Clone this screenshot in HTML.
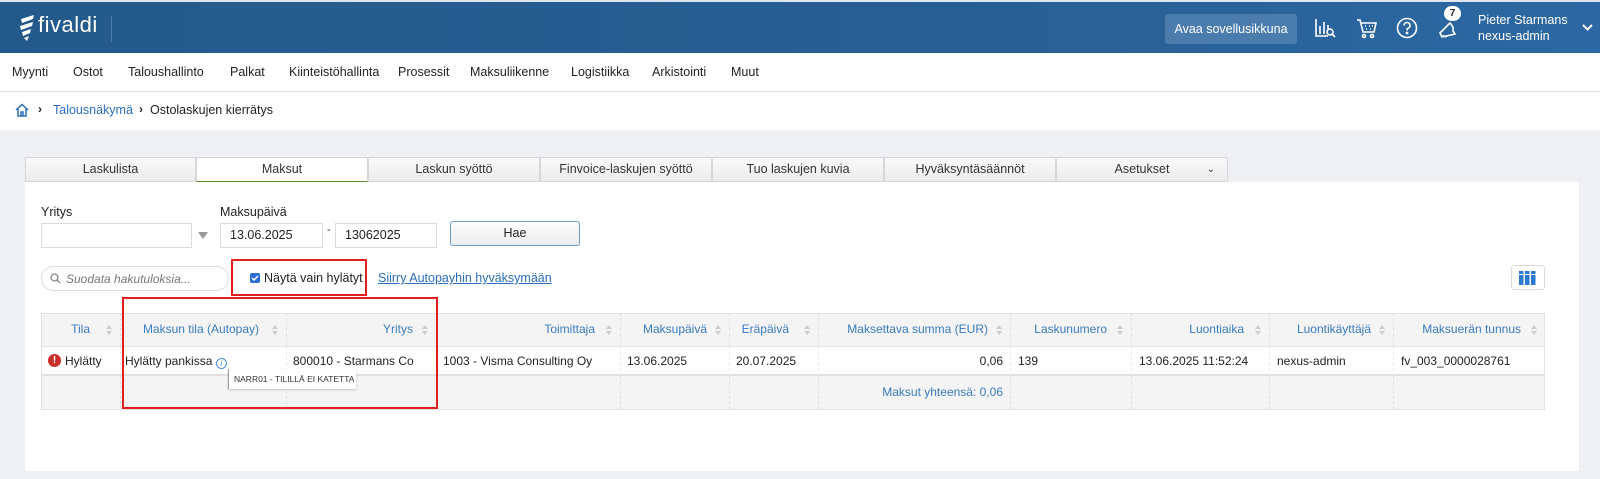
<!DOCTYPE html>
<html><head><meta charset="utf-8">
<style>
*{box-sizing:border-box;margin:0;padding:0}
body{width:1600px;height:479px;overflow:hidden;background:#eff0f4;font-family:"Liberation Sans",sans-serif;font-size:12px;color:#222;position:relative}
.abs{position:absolute}
#hdr{left:0;top:0;width:1600px;height:53px;background:linear-gradient(90deg,#245a8b 0%,#285f93 60%,#2d68a4 100%);border-top:2px solid #dfe6ee}
#nav{left:0;top:53px;width:1600px;height:39px;background:#fff;border-bottom:1px solid #e2e4e8}
#nav span{position:absolute;top:12px;font-size:12.5px;color:#222;white-space:nowrap}
#bc{left:0;top:92px;width:1600px;height:38px;background:#fff}
.tab{position:absolute;top:157px;height:25px;background:linear-gradient(#fafafa,#ececec);border:1px solid #d6d6d6;text-align:center;line-height:23px;font-size:12.5px;color:#333}
#panel{left:25px;top:182px;width:1554px;height:289px;background:#fff}
.inp{position:absolute;background:#fff;border:1px solid #dcdcdc;height:25px;line-height:23px;padding-left:9px;font-size:12.5px}
.th{position:absolute;top:313px;height:33px;line-height:33px;color:#3a7bbf;font-size:12px;border-right:1px dashed #e0e0e0;white-space:nowrap}
.td{position:absolute;top:346px;height:30px;line-height:30px;font-size:12px;color:#222;border-right:1px dashed #e6e6e6;white-space:nowrap}
.tf{position:absolute;top:376px;height:33px;border-right:1px dashed #e2e2e2;white-space:nowrap}
.srt{position:absolute;right:8px;top:12px;width:6px;height:10px}
.srt:before{content:"";position:absolute;left:0;top:0;border-left:3px solid transparent;border-right:3px solid transparent;border-bottom:4px solid #ccc}
.srt:after{content:"";position:absolute;left:0;top:6px;border-left:3px solid transparent;border-right:3px solid transparent;border-top:4px solid #ccc}
</style></head><body>
<div id="hdr" class="abs">
  <svg class="abs" style="left:18px;top:12px" width="18" height="28" viewBox="0 0 18 28"><path d="M3 5 L16 1 L15 5 L4 9Z M2 12 L15 8 L14 12 L3 16Z M4 18 L13 15 L12 19 L5 22Z M6 24 L11 22 L9 27Z" fill="#fff"/></svg>
  <span class="abs" style="left:38px;top:10px;color:#fff;font-size:22px;letter-spacing:0.5px">fivaldi</span>
  <div class="abs" style="left:111px;top:14px;width:1px;height:26px;background:#4f7aa5"></div>
  <div class="abs" style="left:1165px;top:12px;width:132px;height:30px;background:#4a7cad;border-radius:3px;color:#fff;font-size:12.5px;text-align:center;line-height:30px">Avaa sovellusikkuna</div>
  <svg class="abs" style="left:1314px;top:15px" width="22" height="22" viewBox="0 0 22 22" fill="none" stroke="#fff" stroke-width="1.6"><path d="M2 2v17h12M6 17V9M10 17V5M14 12V8"/><circle cx="16" cy="15" r="3"/><path d="M18 17l3 3"/></svg>
  <svg class="abs" style="left:1356px;top:15px" width="22" height="22" viewBox="0 0 22 22" fill="none" stroke="#fff" stroke-width="1.6"><path d="M1 3h3l3 12h11l2-9H5"/><circle cx="8" cy="19" r="1.5"/><circle cx="16" cy="19" r="1.5"/><path d="M9 9h1M13 9h1M16 9h1M10 12h1M14 12h1"/></svg>
  <svg class="abs" style="left:1396px;top:15px" width="22" height="22" viewBox="0 0 22 22" fill="none" stroke="#fff" stroke-width="1.6"><circle cx="11" cy="11" r="9.5"/><path d="M8 8.5a3 3 0 1 1 4 2.8c-1 .4-1 1-1 2.2"/><circle cx="11" cy="16" r=".6" fill="#fff"/></svg>
  <svg class="abs" style="left:1436px;top:16px" width="22" height="22" viewBox="0 0 22 22" fill="none" stroke="#fff" stroke-width="1.6"><path d="M4 15l10-10c2 2 4 5 3 8l2 3-13 3z M7 17a2.5 2.5 0 0 0 4 1"/></svg>
  <div class="abs" style="left:1444px;top:4px;width:17px;height:15px;border-radius:8px;background:#fff;color:#222;font-size:10px;font-weight:bold;text-align:center;line-height:15px">7</div>
  <div class="abs" style="left:1478px;top:10px;color:#fff;font-size:12.5px;line-height:16px">Pieter Starmans<br>nexus-admin</div>
  <svg class="abs" style="left:1582px;top:22px" width="11" height="8" viewBox="0 0 11 8"><path d="M1 1l4.5 4.5L10 1" stroke="#fff" stroke-width="2" fill="none"/></svg>
</div>
<div id="nav" class="abs">
  <span style="left:12px">Myynti</span><span style="left:73px">Ostot</span><span style="left:128px">Taloushallinto</span><span style="left:230px">Palkat</span><span style="left:289px">Kiinteistöhallinta</span><span style="left:398px">Prosessit</span><span style="left:470px">Maksuliikenne</span><span style="left:571px">Logistiikka</span><span style="left:652px">Arkistointi</span><span style="left:731px">Muut</span>
</div>
<div id="bc" class="abs">
  <svg class="abs" style="left:15px;top:11px" width="14" height="14" viewBox="0 0 14 14" fill="none" stroke="#2a6ebb" stroke-width="1.5"><path d="M1 7L7 1.5 13 7M3 6v7h8V6M6 13V9h2v4"/></svg>
  <span class="abs" style="left:38px;top:10px;font-weight:bold;font-size:12px">›</span>
  <span class="abs" style="left:53px;top:11px;color:#2a6ebb;font-size:12.5px">Talousnäkymä</span>
  <span class="abs" style="left:139px;top:10px;font-weight:bold;font-size:12px">›</span>
  <span class="abs" style="left:150px;top:11px;font-size:12.5px">Ostolaskujen kierrätys</span>
</div>
<div id="panel" class="abs"></div>
<div class="tab" style="left:25px;width:171px">Laskulista</div>
<div class="tab" style="left:196px;width:172px;background:#fff;border-bottom:1px solid #5a8a2a">Maksut</div>
<div class="tab" style="left:368px;width:172px">Laskun syöttö</div>
<div class="tab" style="left:540px;width:172px">Finvoice-laskujen syöttö</div>
<div class="tab" style="left:712px;width:172px">Tuo laskujen kuvia</div>
<div class="tab" style="left:884px;width:172px">Hyväksyntäsäännöt</div>
<div class="tab" style="left:1056px;width:172px">Asetukset<span style="position:absolute;right:12px;font-size:10px">⌄</span></div>

<span class="abs" style="left:41px;top:205px;font-size:12.5px">Yritys</span>
<span class="abs" style="left:220px;top:205px;font-size:12.5px">Maksupäivä</span>
<div class="inp" style="left:41px;top:223px;width:151px"></div>
<div class="abs" style="left:198px;top:232px;border-left:5px solid transparent;border-right:5px solid transparent;border-top:7px solid #999"></div>
<div class="inp" style="left:220px;top:223px;width:103px">13.06.2025</div>
<span class="abs" style="left:327px;top:224px;font-size:11px">-</span>
<div class="inp" style="left:335px;top:223px;width:102px">13062025</div>
<div class="abs" style="left:450px;top:221px;width:130px;height:25px;border:1px solid #6a9ccc;border-radius:3px;background:linear-gradient(#fdfdfd,#ececec);text-align:center;line-height:23px;font-size:12.5px">Hae</div>

<div class="abs" style="left:41px;top:266px;width:188px;height:25px;border:1px solid #ddd;border-radius:13px"></div>
<svg class="abs" style="left:50px;top:273px" width="11" height="11" viewBox="0 0 11 11" fill="none" stroke="#888" stroke-width="1.3"><circle cx="4.5" cy="4.5" r="3.5"/><path d="M7 7l3 3"/></svg>
<span class="abs" style="left:66px;top:272px;font-style:italic;color:#777;font-size:12px">Suodata hakutuloksia...</span>
<div class="abs" style="left:231px;top:259px;width:136px;height:37px;border:2px solid #e02020"></div>
<div class="abs" style="left:250px;top:273px;width:10px;height:10px;background:#2b6fd6;border-radius:2px"></div>
<svg class="abs" style="left:250px;top:273px" width="10" height="10" viewBox="0 0 10 10"><path d="M2 5l2 2 4-4" stroke="#fff" stroke-width="1.5" fill="none"/></svg>
<span class="abs" style="left:264px;top:271px;font-size:12.5px">Näytä vain hylätyt</span>
<span class="abs" style="left:378px;top:271px;color:#2a6ebb;text-decoration:underline;font-size:12.5px">Siirry Autopayhin hyväksymään</span>

<div class="abs" style="left:1511px;top:265px;width:34px;height:25px;border:1px solid #ddd;border-radius:3px;background:#fff"></div>
<svg class="abs" style="left:1519px;top:271px" width="17" height="14" viewBox="0 0 17 14" fill="#2a7ad4"><rect x="0" y="0" width="4.5" height="3"/><rect x="6" y="0" width="4.5" height="3"/><rect x="12" y="0" width="4.5" height="3"/><rect x="0" y="4" width="4.5" height="10"/><rect x="6" y="4" width="4.5" height="10"/><rect x="12" y="4" width="4.5" height="10"/></svg>

<div class="abs" style="left:41px;top:313px;width:1504px;height:97px;border:1px solid #e2e2e2;background:#f4f4f4"></div>
<div class="abs" style="left:42px;top:346px;width:1502px;height:30px;background:#fff;border-top:1px solid #e4e4e4;border-bottom:2px solid #e0e0e0"></div>

<div class="th" style="left:42px;width:79px;text-align:right;padding-right:30px">Tila<i class="srt"></i></div>
<div class="th" style="left:121px;width:166px;text-align:right;padding-right:27px">Maksun tila (Autopay)<i class="srt"></i></div>
<div class="th" style="left:287px;width:150px;text-align:right;padding-right:23px">Yritys<i class="srt"></i></div>
<div class="th" style="left:437px;width:184px;text-align:right;padding-right:25px">Toimittaja<i class="srt"></i></div>
<div class="th" style="left:621px;width:109px;text-align:right;padding-right:22px">Maksupäivä<i class="srt"></i></div>
<div class="th" style="left:730px;width:89px;text-align:right;padding-right:29px">Eräpäivä<i class="srt"></i></div>
<div class="th" style="left:819px;width:192px;text-align:right;padding-right:22px">Maksettava summa (EUR)<i class="srt"></i></div>
<div class="th" style="left:1011px;width:121px;text-align:right;padding-right:24px">Laskunumero<i class="srt"></i></div>
<div class="th" style="left:1132px;width:138px;text-align:right;padding-right:25px">Luontiaika<i class="srt"></i></div>
<div class="th" style="left:1270px;width:124px;text-align:right;padding-right:22px">Luontikäyttäjä<i class="srt"></i></div>
<div class="th" style="left:1394px;width:151px;text-align:right;padding-right:24px;border-right:none">Maksuerän tunnus<i class="srt"></i></div>

<div class="td" style="left:42px;width:79px;padding-left:23px">Hylätty</div>
<div class="abs" style="left:48px;top:354px;width:13px;height:13px;border-radius:50%;background:#c9302c;color:#fff;font-size:10px;font-weight:bold;text-align:center;line-height:13px">!</div>
<div class="td" style="left:121px;width:166px;padding-left:4px">Hylätty pankissa <span style="display:inline-block;vertical-align:-1px;width:11px;height:11px;border:1px solid #4a90d9;border-radius:50%;color:#4a90d9;font-size:8px;font-style:italic;text-align:center;line-height:10px">i</span></div>
<div class="td" style="left:287px;width:150px;padding-left:6px">800010 - Starmans Co</div>
<div class="td" style="left:437px;width:184px;padding-left:6px">1003 - Visma Consulting Oy</div>
<div class="td" style="left:621px;width:109px;padding-left:6px">13.06.2025</div>
<div class="td" style="left:730px;width:89px;padding-left:6px">20.07.2025</div>
<div class="td" style="left:819px;width:192px;text-align:right;padding-right:7px">0,06</div>
<div class="td" style="left:1011px;width:121px;padding-left:7px">139</div>
<div class="td" style="left:1132px;width:138px;padding-left:7px">13.06.2025 11:52:24</div>
<div class="td" style="left:1270px;width:124px;padding-left:7px">nexus-admin</div>
<div class="td" style="left:1394px;width:151px;padding-left:7px;border-right:none">fv_003_0000028761</div>

<div class="tf" style="left:42px;width:79px"></div><div class="tf" style="left:121px;width:166px"></div><div class="tf" style="left:287px;width:150px"></div><div class="tf" style="left:437px;width:184px"></div><div class="tf" style="left:621px;width:109px"></div><div class="tf" style="left:730px;width:89px"></div>
<div class="tf" style="left:819px;width:192px;text-align:right;padding-right:7px;line-height:33px;color:#3a7bbf;font-size:12px">Maksut yhteensä: 0,06</div>
<div class="tf" style="left:1011px;width:121px"></div><div class="tf" style="left:1132px;width:138px"></div><div class="tf" style="left:1270px;width:124px"></div>

<div class="abs" style="left:228px;top:369px;width:128px;height:20px;background:#fff;border-left:1px solid #999;box-shadow:0 1px 2px rgba(0,0,0,.2);font-size:8.5px;line-height:20px;padding-left:5px;color:#333;white-space:nowrap;overflow:hidden">NARR01 - TILILLÄ EI KATETTA</div>
<div class="abs" style="left:122px;top:297px;width:316px;height:112px;border:2px solid #e02020"></div>
</body></html>
